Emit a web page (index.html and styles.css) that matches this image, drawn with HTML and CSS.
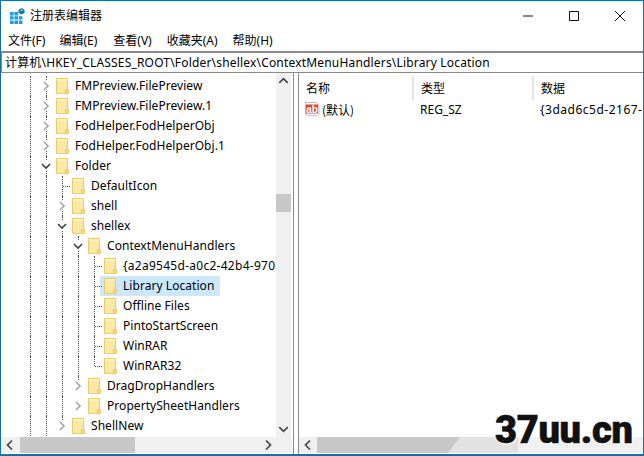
FILE: index.html
```html
<!DOCTYPE html>
<html lang="zh">
<head>
<meta charset="utf-8">
<title>注册表编辑器</title>
<link rel="stylesheet" href="styles.css">
</head>
<body>
<svg class="defs" width="0" height="0">
  <symbol id="folder" viewBox="0 0 13 16">
    <path d="M.5.5h11v15H.5z" fill="#fee9a4" stroke="#efc964"/>
    <path d="M1 1h10v2H1z" fill="#fff3c8"/>
    <path d="M9.500 11.500h3v4h-3z" fill="#fdd97a" stroke="#efc964"/>
  </symbol>
  <symbol id="closed" viewBox="0 0 10 10"><path d="M3 1l4 4-4 4" fill="none" stroke="#a6a6a6" stroke-width="1.600"/></symbol>
  <symbol id="open" viewBox="0 0 10 10"><path d="M1 3l4 4 4-4" fill="none" stroke="#404040" stroke-width="1.600"/></symbol>
</svg>
<div class="window">
  <header class="titlebar">
    <svg class="appicon" width="16" height="16" viewBox="0 0 16 16">
      <path fill="#1a9ee6" d="M1 4h3.600v3.400H1zM5.400 4H9v3.400H5.400zM1 8.200h3.600v3.400H1zM5.400 8.200H9v3.400H5.400zM9.800 8.200h3.600v3.400H9.800zM1 12.400h3.600V16H1zM5.400 12.400H9V16H5.400zM9.800 12.400h3.600V16H9.800z"/>
      <path fill="#137ab8" d="M12.500 0l3 1.700v3.200l-3 1.700-3-1.700V1.700z"/>
      <path fill="#7fd0f5" d="M12.500 1.200l1.700 1-1.700 1-1.700-1z"/>
    </svg>
    <span class="title">注册表编辑器</span>
    <div class="controls">
      <svg width="46" height="30" viewBox="0 0 46 30"><path d="M18 15h10" stroke="#111" fill="none"/></svg>
      <svg width="46" height="30" viewBox="0 0 46 30"><path d="M18.500 10.500h9v9h-9z" stroke="#111" fill="none"/></svg>
      <svg width="46" height="30" viewBox="0 0 46 30"><path d="M18 10l10 10M28 10L18 20" stroke="#111" fill="none"/></svg>
    </div>
  </header>
  <nav class="menubar">
    <span class="menu m1">文件(F)</span>
    <span class="menu m2">编辑(E)</span>
    <span class="menu m3">查看(V)</span>
    <span class="menu m4">收藏夹(A)</span>
    <span class="menu m5">帮助(H)</span>
  </nav>
  <div class="address">计算机\HKEY_CLASSES_ROOT\Folder\shellex\ContextMenuHandlers\Library Location</div>
  <div class="panes">
    <section class="pane tree-pane">
      <div class="pane-body">
        <div class="tree">
          <div class="row"><i class="g"></i><i class="e link"><svg><use href="#closed"/></svg></i><svg class="f"><use href="#folder"/></svg><span class="t">FMPreview.FilePreview</span></div>
          <div class="row"><i class="g"></i><i class="e link"><svg><use href="#closed"/></svg></i><svg class="f"><use href="#folder"/></svg><span class="t">FMPreview.FilePreview.1</span></div>
          <div class="row"><i class="g"></i><i class="e link"><svg><use href="#closed"/></svg></i><svg class="f"><use href="#folder"/></svg><span class="t">FodHelper.FodHelperObj</span></div>
          <div class="row"><i class="g"></i><i class="e link"><svg><use href="#closed"/></svg></i><svg class="f"><use href="#folder"/></svg><span class="t">FodHelper.FodHelperObj.1</span></div>
          <div class="row"><i class="g"></i><i class="e link"><svg><use href="#open"/></svg></i><svg class="f"><use href="#folder"/></svg><span class="t">Folder</span></div>
          <div class="row"><i class="g"></i><i class="g"></i><i class="e tee"></i><svg class="f"><use href="#folder"/></svg><span class="t">DefaultIcon</span></div>
          <div class="row"><i class="g"></i><i class="g"></i><i class="e link"><svg><use href="#closed"/></svg></i><svg class="f"><use href="#folder"/></svg><span class="t">shell</span></div>
          <div class="row"><i class="g"></i><i class="g"></i><i class="e link"><svg><use href="#open"/></svg></i><svg class="f"><use href="#folder"/></svg><span class="t">shellex</span></div>
          <div class="row"><i class="g"></i><i class="g"></i><i class="g"></i><i class="e link"><svg><use href="#open"/></svg></i><svg class="f"><use href="#folder"/></svg><span class="t">ContextMenuHandlers</span></div>
          <div class="row"><i class="g"></i><i class="g"></i><i class="g"></i><i class="g"></i><i class="e tee"></i><svg class="f"><use href="#folder"/></svg><span class="t guid">{a2a9545d-a0c2-42b4-970</span></div>
          <div class="row"><i class="g"></i><i class="g"></i><i class="g"></i><i class="g"></i><i class="e tee"></i><span class="sel"><svg class="f"><use href="#folder"/></svg><span class="t">Library Location</span></span></div>
          <div class="row"><i class="g"></i><i class="g"></i><i class="g"></i><i class="g"></i><i class="e tee"></i><svg class="f"><use href="#folder"/></svg><span class="t">Offline Files</span></div>
          <div class="row"><i class="g"></i><i class="g"></i><i class="g"></i><i class="g"></i><i class="e tee"></i><svg class="f"><use href="#folder"/></svg><span class="t">PintoStartScreen</span></div>
          <div class="row"><i class="g"></i><i class="g"></i><i class="g"></i><i class="g"></i><i class="e tee"></i><svg class="f"><use href="#folder"/></svg><span class="t">WinRAR</span></div>
          <div class="row"><i class="g"></i><i class="g"></i><i class="g"></i><i class="g"></i><i class="e ell"></i><svg class="f"><use href="#folder"/></svg><span class="t">WinRAR32</span></div>
          <div class="row"><i class="g"></i><i class="g"></i><i class="g"></i><i class="e link-top"><svg><use href="#closed"/></svg></i><svg class="f"><use href="#folder"/></svg><span class="t">DragDropHandlers</span></div>
          <div class="row"><i class="g"></i><i class="g"></i><i class="g"></i><i class="e"><svg><use href="#closed"/></svg></i><svg class="f"><use href="#folder"/></svg><span class="t">PropertySheetHandlers</span></div>
          <div class="row"><i class="g"></i><i class="g"></i><i class="e link-top"><svg><use href="#closed"/></svg></i><svg class="f"><use href="#folder"/></svg><span class="t">ShellNew</span></div>
        </div>
        <div class="vscroll">
          <svg class="arrow" viewBox="0 0 16 16"><path d="M3.500 10l4.500-4.500 4.500 4.500" fill="none" stroke="#444" stroke-width="1.700"/></svg>
          <div class="vtrack"><div class="vthumb"></div></div>
          <svg class="arrow" viewBox="0 0 16 16"><path d="M3.500 6l4.500 4.500 4.500-4.500" fill="none" stroke="#444" stroke-width="1.700"/></svg>
        </div>
      </div>
      <div class="hscroll tree-h">
        <svg class="arrow" viewBox="0 0 16 16"><path d="M10 3.500L5.500 8l4.500 4.500" fill="none" stroke="#444" stroke-width="1.700"/></svg>
        <div class="htrack"><div class="hthumb tree-thumb"></div></div>
        <svg class="arrow" viewBox="0 0 16 16"><path d="M6 3.500L10.500 8 6 12.500" fill="none" stroke="#444" stroke-width="1.700"/></svg>
      </div>
    </section>
    <section class="pane list-pane">
      <div class="pane-body list-body">
        <div class="cols">
          <span class="col c-name">名称</span>
          <span class="col c-type">类型</span>
          <span class="col c-data">数据</span>
        </div>
        <div class="item">
          <span class="c-name cell">
            <svg class="ab" width="15" height="16" viewBox="0 0 15 16">
              <path d="M.5.5h11l2.500 2.500v9.500l-2 2-2-1.500-2 1-2-1-2 1-3.500-1.500z" fill="#fff" stroke="#bdbdbd"/>
              <rect x="1" y="2.500" width="12" height="9" fill="#d9482b"/>
              <text class="abt" x="7" y="10.500">ab</text>
            </svg>
            <span class="nm">(默认)</span>
          </span>
          <span class="c-type cell">REG_SZ</span>
          <span class="c-data cell data">{3dad6c5d-2167-</span>
        </div>
      </div>
      <div class="hscroll list-h">
        <svg class="arrow" viewBox="0 0 16 16"><path d="M10 3.500L5.500 8l4.500 4.500" fill="none" stroke="#444" stroke-width="1.700"/></svg>
        <div class="htrack"><div class="band"></div><div class="hthumb list-thumb"></div></div>
      </div>
    </section>
  </div>
  <div class="watermark">37uu.cn</div>
</div>
</body>
</html>
```
FILE: styles.css
```css
* { box-sizing: border-box; }
html, body { margin: 0; padding: 0; }
body { width: 644px; height: 456px; overflow: hidden; background: #fff; font: 12px/20px "Noto Sans", "Noto Sans CJK SC", sans-serif; color: #000; }
.defs { position: absolute; }
.window { position: relative; width: 644px; height: 456px; border: 1px solid #1a6ea8; border-bottom-width: 2px; display: flex; flex-direction: column; overflow: hidden; }
.titlebar { height: 29px; flex: none; display: flex; align-items: center; padding-left: 8px; }
.appicon { margin-top: 1px; }
.title { margin-left: 5px; margin-top: -2px; font-family: "Noto Sans CJK SC", sans-serif; }
.controls { margin-left: auto; display: flex; }
.controls svg { display: block; }
.menubar { height: 21px; flex: none; display: flex; align-items: center; }
.menu { white-space: nowrap; }
.m1 { margin-left: 7px; }
.m2 { margin-left: 14px; }
.m3 { margin-left: 16px; }
.m4 { margin-left: 15px; }
.m5 { margin-left: 15px; }
.address { height: 22px; flex: none; border-style: solid; border-width: 2px 0 1px 1px; border-color: #8a8a8a; line-height: 19px; padding-left: 3px; white-space: nowrap; overflow: hidden; letter-spacing: .18px; }
.panes { flex: 1; min-height: 0; display: flex; gap: 4px; }
.pane { display: flex; flex-direction: column; min-width: 0; border-right: 1px solid #8a8a8a; padding-bottom: 1px; }
.tree-pane { width: 293px; }
.list-pane { flex: 1; border-left: 1px solid #8a8a8a; border-right: 0; }
.pane-body { flex: 1; min-height: 0; display: flex; padding-right: 1px; }
.list-body { display: block; overflow: hidden; padding-right: 0; }
.tree { flex: 1; min-width: 0; overflow: hidden; padding-top: 3px; padding-left: 21px; }
.row { height: 20px; display: flex; align-items: center; white-space: nowrap; }
.g, .e { position: relative; flex: none; width: 16px; height: 20px; display: block; }
.g::before, .e.link::before, .e.tee::before, .e.ell::before, .e.link-top::before { content: ""; position: absolute; left: 8px; top: 0; bottom: 0; border-left: 1px dotted #505050; }
.e.ell::before, .e.link-top::before { bottom: 10px; }
.e.tee::after, .e.ell::after { content: ""; position: absolute; left: 9px; top: 10px; width: 7px; border-top: 1px dotted #505050; }
.e svg { position: absolute; left: 3px; top: 5px; width: 10px; height: 10px; background: #fff; }
.f { flex: none; width: 13px; height: 16px; margin-left: 2px; }
.t { margin-left: 6px; padding-right: 4px; letter-spacing: .05px; }
.guid { letter-spacing: .27px; }
.sel { display: flex; align-items: center; height: 20px; background: #cce8ff; margin-left: -2px; width: 120px; padding-left: 4px; }
.sel .f { margin-left: 0; }
.vscroll { flex: none; width: 15px; margin-right: 1px; background: #f0f0f0; display: flex; flex-direction: column; }
.arrow { flex: none; width: 16px; height: 16px; display: block; }
.vscroll .arrow { width: 15px; }
.vtrack { flex: 1; position: relative; }
.vthumb { position: absolute; left: 0; right: 0; top: 105px; height: 18px; background: #c8c8c8; }
.hscroll { flex: none; height: 16px; background: #f0f0f0; display: flex; padding-left: 1px; }
.tree-h { margin-right: 1px; padding-right: 16px; }
.htrack { flex: 1; position: relative; }
.hthumb { position: absolute; top: 0; bottom: 0; background: #c8c8c8; }
.tree-thumb { left: 2px; width: 115px; }
.band { position: absolute; left: 1px; top: 0; bottom: 0; width: 201px; background: #e2e2e2; }
.list-thumb { left: 1px; width: 143px; clip-path: polygon(0 0, 100% 0, calc(100% - 12px) 100%, 0 100%); }
.cols { height: 24px; margin-top: 3px; display: flex; align-items: center; }
.col { height: 24px; line-height: 23px; border-right: 2px solid #e5e5e5; font-family: "Noto Sans CJK SC", sans-serif; padding-left: 7px; flex: none; }
.item { display: flex; height: 20px; white-space: nowrap; }
.cell { flex: none; padding-left: 6px; display: flex; align-items: center; overflow: hidden; }
.c-name { width: 115px; }
.c-type { width: 120px; }
.c-data { width: 110px; border-right: 0; }
.data { letter-spacing: .5px; }
.ab { flex: none; margin-right: 2px; }
.abt { font: bold 10px "Liberation Sans", sans-serif; fill: #fff; text-anchor: middle; }
.nm { font-family: "Noto Sans CJK SC", sans-serif; }
.watermark { position: absolute; left: 494px; top: 409px; font: 900 38px/40px Roboto, sans-serif; white-space: nowrap; letter-spacing: -.3px; color: #111; -webkit-text-stroke: .6px #111; text-shadow: 0 0 2px #fff, 0 0 3px #fff, 1px 1px 2px #fff, -1px -1px 2px #fff; }
```
